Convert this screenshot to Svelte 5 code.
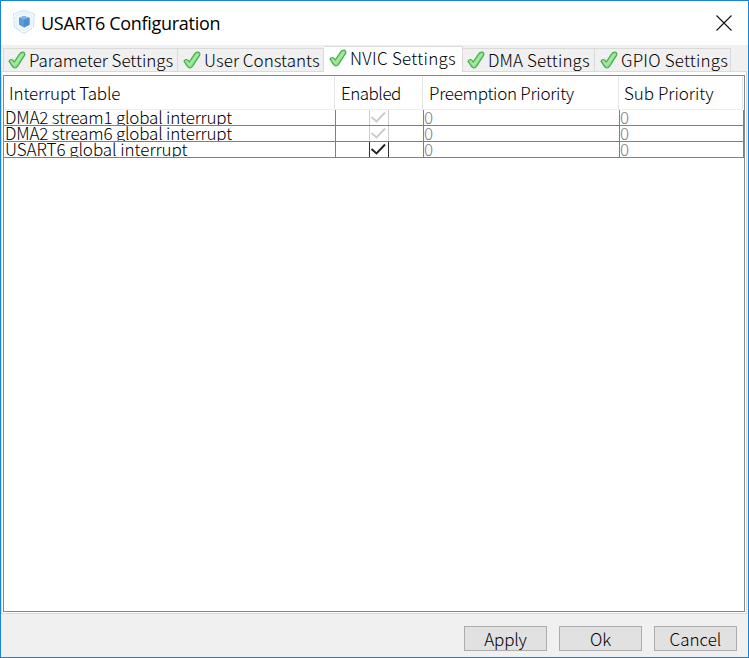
<script>
  const tabs = [
    { label: 'Parameter Settings', width: 175, spacing: -0.03 },
    { label: 'User Constants', width: 146, spacing: 0.03 },
    { label: 'NVIC Settings', width: 139, spacing: 0.3, active: true },
    { label: 'DMA Settings', width: 132, spacing: 0.12 },
    { label: 'GPIO Settings', width: 136, spacing: 0.22 }
  ];
  const columns = [
    { label: 'Interrupt Table', spacing: -0.13 },
    { label: 'Enabled', spacing: -0.5 },
    { label: 'Preemption Priority', spacing: -0.27 },
    { label: 'Sub Priority', spacing: 0 }
  ];
  const rows = [
    { name: 'DMA2 stream1 global interrupt', spacing: -0.18, locked: true },
    { name: 'DMA2 stream6 global interrupt', spacing: -0.18, locked: true },
    { name: 'USART6 global interrupt', spacing: -0.05, locked: false }
  ];
  const buttons = [
    { label: 'Apply', spacing: -0.2 },
    { label: 'Ok', spacing: 0 },
    { label: 'Cancel', spacing: 0 }
  ];
</script>

<div class="window">
  <header class="titlebar">
    <svg class="logo" width="24" height="26" viewBox="0 0 24 26">
      <path d="M12 1.500 22.500 5 21.500 18 12 24.500 2.500 18 1.500 5Z" fill="#fbfdff" stroke="#c3def4" stroke-width="1.100" stroke-dasharray="3 .6" />
      <path d="M12 3.500 20 6.500v10L12 22l-8-5.500v-10Z" fill="#f1f8fd" stroke="#dcecf9" />
      <path d="M7 8.700 12 7l5.500 1.700v7L12 18.500l-5-2.800Z" fill="#5b9bd5" />
      <path d="m7 8.700 5 2 5.500-2L12 7Z" fill="#7fb4e3" />
      <path d="M12 10.700v7.800l5.500-2.800v-7Z" fill="#4b8fce" />
    </svg>
    <h1>USART6 Configuration</h1>
    <svg class="close" width="16" height="16" viewBox="0 0 16 16">
      <path d="m.5.500 15 15m0-15-15 15" stroke="#111" stroke-width="1.100" />
    </svg>
  </header>

  <nav class="tabs">
    {#each tabs as tab}
      <div class="tab" class:active={tab.active} style="width: {tab.width}px">
        <svg width="18" height="18" viewBox="0 0 18 18">
          <path d="M1 10.200Q1.800 8.300 3.800 8.500 5.200 8.800 6.200 11L11.500 3.200Q13 1 15 1.200 17.500 1.800 16.700 4.200L9.800 14.800Q8.300 17.200 6.600 17 5.300 16.700 4.300 15.200Z" fill="#93e08d" stroke="#42b04e" stroke-width="1.200" stroke-linejoin="round" />
          <path d="M3.300 10.600 6.700 14 14.500 3.500" fill="none" stroke="#aaeaa2" stroke-width="1.400" />
        </svg>
        <span style="letter-spacing: {tab.spacing}px">{tab.label}</span>
      </div>
    {/each}
  </nav>

  <main class="pane">
    <div class="table">
      <div class="head">
        {#each columns as column}
          <div><span style="letter-spacing: {column.spacing}px">{column.label}</span></div>
        {/each}
      </div>
      {#each rows as row}
        <div class="row">
          <div><span style="letter-spacing: {row.spacing}px">{row.name}</span></div>
          <div class="check" class:locked={row.locked}>
            <i><svg width="18" height="15" viewBox="0 0 18 15"><path d="m1.500 7 5 4.500 8.500-9" fill="none" stroke="currentColor" stroke-width="1.900" /></svg></i>
          </div>
          <div class="value"><span>0</span></div>
          <div class="value"><span>0</span></div>
        </div>
      {/each}
    </div>
  </main>

  <footer>
    {#each buttons as button}
      <button><span style="letter-spacing: {button.spacing}px">{button.label}</span></button>
    {/each}
  </footer>
</div>

<style>
  .window {
    box-sizing: border-box;
    width: 749px;
    height: 658px;
    border: 1px solid #1883d7;
    background: #f0f0f0;
    display: flex;
    flex-direction: column;
    overflow: hidden;
    color: #000;
    font: 300 17px/20px 'Noto Sans CJK JP', sans-serif;
    white-space: nowrap;
  }
  .titlebar {
    height: 44px;
    flex: none;
    box-sizing: border-box;
    display: flex;
    align-items: center;
    padding: 0 16px 0 11px;
    background: #fff;
  }
  .logo { margin-top: -3px; }
  h1 {
    flex: 1;
    margin: 0 0 0 5px;
    font: 400 18px/24px 'Open Sans', sans-serif;
    letter-spacing: -0.3px;
  }
  .tabs {
    height: 26px;
    flex: none;
    display: flex;
    align-items: flex-end;
    padding-left: 2px;
  }
  .tab {
    box-sizing: border-box;
    height: 23px;
    display: flex;
    align-items: center;
    gap: 3px;
    padding-left: 4px;
    border: 1px solid #dadada;
    border-width: 1px 1px 0 0;
  }
  .tab:first-child { border-left-width: 1px; }
  .tab:nth-child(2), .tab:last-child { padding-left: 5px; }
  .tab svg { flex: none; }
  .tab.active {
    position: relative;
    height: 26px;
    margin-bottom: -1px;
    padding: 0 0 3px 5px;
    background: #fff;
  }
  .pane {
    box-sizing: border-box;
    height: 543px;
    flex: none;
    margin-right: 1px;
    padding: 3px 1px 1px 1px;
    border: 1px solid #dadada;
    background: #fff;
  }
  .table {
    box-sizing: border-box;
    height: 537px;
    width: 742px;
    border: 1px solid #828790;
  }
  .head, .row {
    display: grid;
    grid-template-columns: 331px 88px 196px 124px;
    width: 739px;
  }
  .head {
    height: 34px;
    box-sizing: border-box;
    border-bottom: 1px solid #ededed;
  }
  .head div {
    padding: 7px 0 0 5px;
    border-right: 1px solid #e5e5e5;
  }
  .head div:nth-child(2), .head div:nth-child(3) { padding-left: 6px; }
  .row {
    box-sizing: border-box;
    width: 740px;
    grid-template-columns: 332px 88px 196px 124px;
    height: 16px;
    border-bottom: 1px solid #808080;
    line-height: 14px;
  }
  .row > div {
    height: 15px;
    box-sizing: border-box;
    overflow: hidden;
    border-right: 1px solid #808080;
    padding-left: 1px;
  }
  .row .value { color: #808080; padding-left: 0; }
  .row .check {
    display: flex;
    justify-content: center;
    padding: 0 1px 0 0;
    color: #222;
  }
  .check i {
    display: block;
    width: 18px;
    height: 15px;
    border: solid #333;
    border-width: 0 1px;
  }
  .check svg { display: block; }
  .row .check.locked { color: #ccc; }
  .check.locked i { border-color: #ccc; }
  footer {
    flex: 1;
    display: flex;
    align-items: flex-start;
    justify-content: flex-end;
    gap: 12px;
    padding: 12px 11px 0 0;
  }
  button {
    box-sizing: border-box;
    width: 83px;
    height: 25px;
    padding: 0;
    border: 1px solid #adadad;
    background: #e1e1e1;
    color: inherit;
    font: inherit;
  }
</style>
